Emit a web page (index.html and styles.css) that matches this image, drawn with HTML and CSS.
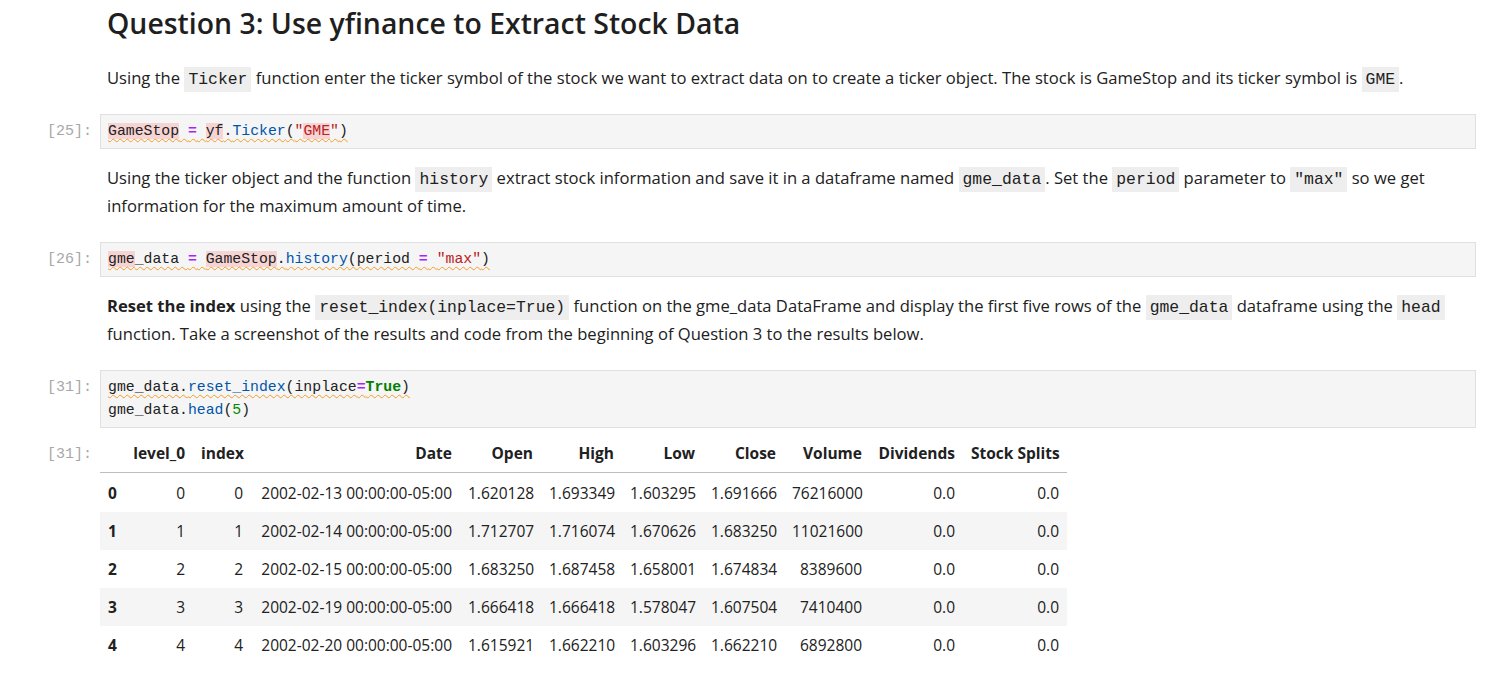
FILE: index.html
```html
<!DOCTYPE html>
<html lang="en">
<head>
<meta charset="utf-8">
<title>Question 3: Use yfinance to Extract Stock Data</title>
<link rel="stylesheet" href="styles.css">
</head>
<body>
<div class="notebook">

  <div class="cell">
    <div class="prompt"></div>
    <div class="md md-first">
      <h1>Question 3: Use yfinance to Extract Stock Data</h1>
      <p>Using the <code>Ticker</code> function enter the ticker symbol of the stock we want to extract data on to create a ticker object. The stock is GameStop and its ticker symbol is <code>GME</code>.</p>
    </div>
  </div>

  <div class="cell">
    <div class="prompt">[25]:</div>
    <div class="code"><div class="line"><span class="wavy"><span class="hl">GameStop</span> <span class="op">=</span> <span class="hl">yf</span>.<span class="prop">Ticker</span>(<span class="str">"<span class="hl">GME</span>"</span>)</span></div></div>
  </div>

  <div class="cell">
    <div class="prompt"></div>
    <div class="md">
      <p>Using the ticker object and the function <code>history</code> extract stock information and save it in a dataframe named <code>gme_data</code>. Set the <code>period</code> parameter to <code>"max"</code> so we get information for the maximum amount of time.</p>
    </div>
  </div>

  <div class="cell">
    <div class="prompt">[26]:</div>
    <div class="code"><div class="line"><span class="wavy"><span class="hl">gme</span>_data <span class="op">=</span> <span class="hl">GameStop</span>.<span class="prop">history</span>(period <span class="op">=</span> <span class="str">"max"</span>)</span></div></div>
  </div>

  <div class="cell">
    <div class="prompt"></div>
    <div class="md">
      <p><strong>Reset the index</strong> using the <code>reset_index(inplace=True)</code> function on the gme_data DataFrame and display the first five rows of the <code>gme_data</code> dataframe using the <code>head</code> function. Take a screenshot of the results and code from the beginning of Question 3 to the results below.</p>
    </div>
  </div>

  <div class="cell">
    <div class="prompt">[31]:</div>
    <div class="code">
      <div class="line"><span class="wavy">gme_data.<span class="prop">reset_index</span>(inplace<span class="op">=</span><span class="kw">True</span>)</span></div>
      <div class="line">gme_data.<span class="prop">head</span>(<span class="num">5</span>)</div>
    </div>
  </div>

  <div class="cell output">
    <div class="prompt">[31]:</div>
    <div class="out">
      <table class="df">
        <colgroup>
          <col class="c-idx"><col class="c-l0"><col class="c-ix"><col class="c-date"><col class="c-num"><col class="c-num"><col class="c-num"><col class="c-num"><col class="c-vol"><col class="c-div"><col class="c-split">
        </colgroup>
        <thead>
          <tr><th></th><th>level_0</th><th>index</th><th>Date</th><th>Open</th><th>High</th><th>Low</th><th>Close</th><th>Volume</th><th>Dividends</th><th>Stock Splits</th></tr>
        </thead>
        <tbody>
          <tr><th>0</th><td>0</td><td>0</td><td>2002-02-13 00:00:00-05:00</td><td>1.620128</td><td>1.693349</td><td>1.603295</td><td>1.691666</td><td>76216000</td><td>0.0</td><td>0.0</td></tr>
          <tr><th>1</th><td>1</td><td>1</td><td>2002-02-14 00:00:00-05:00</td><td>1.712707</td><td>1.716074</td><td>1.670626</td><td>1.683250</td><td>11021600</td><td>0.0</td><td>0.0</td></tr>
          <tr><th>2</th><td>2</td><td>2</td><td>2002-02-15 00:00:00-05:00</td><td>1.683250</td><td>1.687458</td><td>1.658001</td><td>1.674834</td><td>8389600</td><td>0.0</td><td>0.0</td></tr>
          <tr><th>3</th><td>3</td><td>3</td><td>2002-02-19 00:00:00-05:00</td><td>1.666418</td><td>1.666418</td><td>1.578047</td><td>1.607504</td><td>7410400</td><td>0.0</td><td>0.0</td></tr>
          <tr><th>4</th><td>4</td><td>4</td><td>2002-02-20 00:00:00-05:00</td><td>1.615921</td><td>1.662210</td><td>1.603296</td><td>1.662210</td><td>6892800</td><td>0.0</td><td>0.0</td></tr>
        </tbody>
      </table>
    </div>
  </div>

</div>
</body>
</html>
```
FILE: styles.css
```css
* { box-sizing: border-box; }

html, body {
  margin: 0;
  padding: 0;
  background: #ffffff;
}

body {
  font-family: "Open Sans", "Noto Sans", "Liberation Sans", sans-serif;
  color: #212121;
  overflow: hidden;
}

.notebook {
  padding: 0 10px 0 0;
}

.cell {
  display: flex;
  align-items: flex-start;
}

.prompt {
  flex: 0 0 100px;
  width: 100px;
  padding: 6px 8px 0 0;
  text-align: right;
  font-family: "Liberation Mono", "DejaVu Sans Mono", monospace;
  font-size: 15px;
  line-height: 23px;
  color: #a8a8a8;
}

.md {
  flex: 1;
  padding: 15px 0 22px 7px;
  font-size: 16.6px;
  line-height: 28px;
}

.md-first {
  padding-top: 5px;
}

.md h1 {
  margin: 0 0 23px 0;
  font-size: 28.4px;
  line-height: 36px;
  font-weight: 600;
  color: #1f1f1f;
}

.md p {
  margin: 0;
}

.md strong {
  font-weight: 700;
}

.md code {
  font-family: "Liberation Mono", "DejaVu Sans Mono", monospace;
  font-size: 16.4px;
  line-height: 1;
  background: #eeeeee;
  padding: 3px 4px;
  color: #212121;
}

.code {
  flex: 1;
  background: #f5f5f5;
  border: 1px solid #e0e0e0;
  padding: 5px 7px;
  font-family: "Liberation Mono", "DejaVu Sans Mono", monospace;
  font-size: 14.8px;
  line-height: 23px;
  color: #212121;
}

.line {
  white-space: pre;
}

.wavy {
  text-decoration: underline wavy #f39c2a;
  text-decoration-thickness: 1px;
  text-underline-offset: 3px;
  text-decoration-skip-ink: none;
}

.hl { background: #f7d4d4; }
.op { color: #aa22ff; font-weight: 700; }
.prop { color: #0055aa; }
.str { color: #ba2121; }
.kw { color: #008000; font-weight: 700; }
.num { color: #008800; }

.output {
  margin-top: 9px;
}

.output .prompt {
  padding-top: 6px;
}

.out {
  flex: 1;
}

.df {
  border-collapse: collapse;
  table-layout: fixed;
  width: 967px;
  font-size: 15.5px;
  color: #212121;
}

.df col.c-idx { width: 25px; }
.df col.c-l0 { width: 68px; }
.df col.c-ix { width: 58px; }
.df col.c-date { width: 209px; }
.df col.c-num { width: 81px; }
.df col.c-vol { width: 86px; }
.df col.c-div { width: 93px; }
.df col.c-split { width: 104px; }

.df th, .df td {
  padding: 0 8px;
  text-align: right;
  white-space: nowrap;
  height: 38px;
}

.df thead th {
  height: 35px;
  padding-bottom: 2px;
  border-bottom: 1px solid #bdbdbd;
  font-weight: 700;
}

.df tbody tr:first-child th,
.df tbody tr:first-child td {
  height: 40px;
  padding-top: 2px;
}

.df tbody th {
  text-align: left;
  font-weight: 700;
}

.df tbody tr:nth-child(even) {
  background: #f5f5f5;
}
```
